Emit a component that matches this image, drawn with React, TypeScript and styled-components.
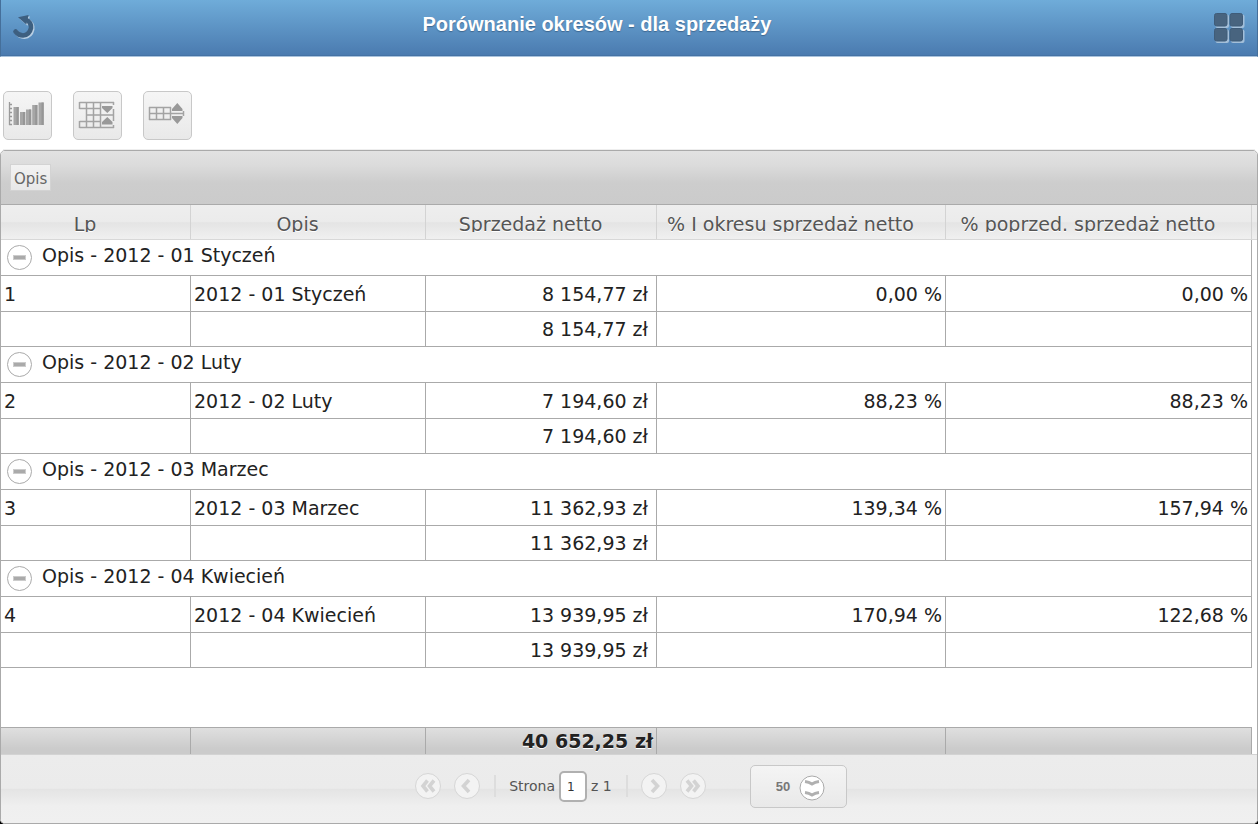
import React from "react";
import styled, { createGlobalStyle } from "styled-components";

const GlobalStyle = createGlobalStyle`
  *, *::before, *::after { box-sizing: border-box; }
  html { background: #000; }
  body {
    margin: 0;
    font-family: Verdana, "DejaVu Sans", sans-serif;
    color: #222;
  }
`;

const Page = styled.div`
  display: flex;
  flex-direction: column;
  min-height: 100vh;
  background: #fff;
  border-radius: 0 0 5px 5px;
`;

const TopBar = styled.header`
  display: flex;
  align-items: flex-start;
  justify-content: space-between;
  height: 57px;
  padding: 11px 12px 0 10px;
  border-left: 1px solid #456f9a;
  border-right: 1px solid #456f9a;
  border-bottom: 1px solid #a9c3dd;
  background: linear-gradient(#6facd9, #4a7aaf);
  box-shadow: inset 0 -1px 0 #4572a4;
`;

const Title = styled.h1`
  flex: 1;
  margin: 0;
  padding-right: 58px;
  font: bold 20px/26px "Liberation Sans", Arial, sans-serif;
  text-align: center;
  color: #fff;
  text-shadow: 0 1px 1px #3e6790;
`;

const BarButton = styled.button`
  display: block;
  padding: 0;
  border: 0;
  background: none;
  cursor: pointer;
  svg { display: block; }
`;

const Toolbar = styled.div`
  display: flex;
  gap: 21px;
  padding: 34px 3px 9px;
`;

const ToolButton = styled.button`
  display: flex;
  align-items: center;
  justify-content: center;
  width: 49px;
  height: 49px;
  padding: 0 2px 2px 0;
  border: 1px solid #c8c8c8;
  border-radius: 5px;
  background: linear-gradient(#f5f5f5, #e9e9e9);
  cursor: pointer;
`;

const Rule = styled.div`
  height: 1px;
  margin: 0 3px;
  background: #eee;
`;

const Panel = styled.main`
  display: flex;
  flex: 1;
  flex-direction: column;
  border: 1px solid #aaa;
  border-radius: 5px;
  overflow: hidden;
`;

const GroupBar = styled.div`
  display: flex;
  align-items: center;
  height: 54px;
  padding: 0 9px;
  border-bottom: 1px solid #aaa;
  background: linear-gradient(#e2e2e2, #dcdcdc 25%, #cdcdcd 60%, #cbcbcb);
`;

const GroupTag = styled.button`
  height: 27px;
  padding: 2px 3px 0;
  border: 1px solid #d3d3d3;
  background: linear-gradient(#f2f2f2, #e8e8e8);
  font: 15px/22px Verdana, "DejaVu Sans", sans-serif;
  color: #666;
`;

const HeadStrip = styled.div`
  padding-right: 5px;
  border-bottom: 1px solid #d8d8d8;
  background: linear-gradient(#eee, #ebebeb 50%, #e4e4e4 52%, #f0f0f0);
`;

const BodyArea = styled.div`
  flex: 1;
  padding-right: 5px;
  background: #fff;
`;

const FootStrip = styled.div`
  padding-right: 5px;
  background: #fff;
`;

const Table = styled.table`
  width: 100%;
  table-layout: fixed;
  border-collapse: separate;
  border-spacing: 0;
  font-size: 19px;
  line-height: 24px;
`;

const HeadCell = styled.th`
  height: 34px;
  padding: 0 22px 0 1px;
  border-right: 1px solid #d3d3d3;
  font-weight: normal;
  color: #555;
  text-shadow: 0 1px 0 #fff;
`;

const HeadLabel = styled.span`
  display: block;
  height: 20px;
  overflow: hidden;
  white-space: nowrap;
`;

const GroupCell = styled.td`
  height: 36px;
  padding: 0 6px;
  border-right: 1px solid #aaa;
  border-bottom: 1px solid #aaa;
  vertical-align: top;
`;

const GroupLine = styled.div`
  display: flex;
  gap: 10px;
  height: 30px;
  align-items: center;
`;

const Toggle = styled.button`
  display: flex;
  flex: none;
  align-items: center;
  justify-content: center;
  width: 25px;
  height: 25px;
  margin-top: 5px;
  padding: 0;
  border: 1px solid #aaa;
  border-radius: 50%;
  background: #fff;
  cursor: pointer;
`;

const Minus = styled.span`
  width: 13px;
  height: 5px;
  border: 1px solid #ccc;
  background: #aaa;
`;

const Cell = styled.td<{ $align?: "left" | "right"; $short?: boolean; $wide?: boolean }>`
  height: ${(p) => (p.$short ? 35 : 36)}px;
  padding: 0 ${(p) => (p.$wide ? 8 : 3)}px 0 3px;
  border-right: 1px solid #aaa;
  border-bottom: 1px solid #aaa;
  text-align: ${(p) => p.$align ?? "left"};
  white-space: nowrap;
`;

const FootCell = styled.td`
  height: 27px;
  padding: 0 3px;
  border-top: 1px solid #aaa;
  border-right: 1px solid #aaa;
  background: linear-gradient(#dfdfdf, #cbcbcb 80%);
  font-weight: bold;
  text-align: right;
  text-shadow: 0 1px 0 #fff;
  white-space: nowrap;
`;

const Pager = styled.nav`
  display: flex;
  align-items: flex-start;
  justify-content: center;
  height: 69px;
  padding: 10px 0 0 4px;
  border-top: 1px solid #d3d3d3;
  background: linear-gradient(#ececec, #ebebeb 49%, #e4e4e4 50%, #efefef 75%, #f0f0f0);
  font-size: 14px;
  color: #555;
`;

const PagerGroup = styled.div`
  display: flex;
  align-items: center;
  gap: 13px;
  height: 42px;
  margin-right: 44px;
`;

const RoundButton = styled.button`
  display: block;
  width: 26px;
  height: 26px;
  padding: 0;
  border: 1px solid #d6d6d6;
  border-radius: 13px;
  background: #f3f3f3;
  svg { display: block; }
`;

const Divider = styled.span`
  width: 2px;
  height: 22px;
  margin-left: 1px;
  background: #ddd;
`;

const PageLabel = styled.label`
  display: flex;
  align-items: center;
  gap: 4px;
`;

const PageInput = styled.input`
  width: 28px;
  height: 31px;
  padding: 2px 6px 0;
  border: 2px solid #b0b0b0;
  border-radius: 5px;
  background: #fff;
  font: 12px "DejaVu Sans", sans-serif;
  color: #333;
`;

const SizeBox = styled.div`
  position: relative;
  width: 97px;
  height: 43px;
`;

const SizeSelect = styled.select`
  width: 100%;
  height: 100%;
  padding: 0 25px;
  appearance: none;
  border: 1px solid #c8c8c8;
  border-radius: 5px;
  background: linear-gradient(#f4f4f4, #e9e9e9);
  font: bold 13px "Liberation Sans", Arial, sans-serif;
  color: #777;
`;

const SizeIcon = styled.svg`
  position: absolute;
  top: 10px;
  right: 22px;
  pointer-events: none;
`;

const widths = [190, 235, 231, 289, 306];
const headers = ["Lp", "Opis", "Sprzedaż netto", "% I okresu sprzedaż netto", "% poprzed. sprzedaż netto"];
const rows = [
  { name: "2012 - 01 Styczeń", net: "8 154,77 zł", first: "0,00 %", prev: "0,00 %" },
  { name: "2012 - 02 Luty", net: "7 194,60 zł", first: "88,23 %", prev: "88,23 %" },
  { name: "2012 - 03 Marzec", net: "11 362,93 zł", first: "139,34 %", prev: "157,94 %" },
  { name: "2012 - 04 Kwiecień", net: "13 939,95 zł", first: "170,94 %", prev: "122,68 %" },
];

const Columns = () => (
  <colgroup>
    {widths.map((w, i) => (
      <col key={i} width={w} />
    ))}
  </colgroup>
);

const BackIcon = () => {
  const shape = (
    <>
      <path d="M14.5 8.5Q20.5 11 20 17Q18.5 24 12 24.5Q7.5 24.5 4.5 20.5" fill="none" strokeWidth="4.6" strokeLinecap="round" />
      <path d="M7 6.3L17.6 4L15.3 13.5Z" stroke="none" />
    </>
  );
  return (
    <svg width="28" height="32" viewBox="0 0 28 32">
      <g transform="translate(1.2 1.2)" stroke="#b9cfe3" fill="#b9cfe3">{shape}</g>
      <g stroke="#3d5f80" fill="#3d5f80">{shape}</g>
    </svg>
  );
};

const TilesIcon = () => (
  <svg width="32" height="33" viewBox="0 0 32 33">
    {[[1, 2], [16.5, 2], [1, 17], [16.5, 17]].map(([x, y]) => (
      <g key={`${x}-${y}`}>
        <rect x={x + 1.5} y={y + 1.5} width="13.5" height="13.5" rx="2" fill="#a3bfd9" />
        <rect x={x + 0.5} y={y + 0.5} width="12.5" height="12.5" rx="2" fill="#48647f" stroke="#3f5c79" />
      </g>
    ))}
  </svg>
);

const ChartIcon = () => (
  <svg width="37" height="28" viewBox="0 0 37 28">
    <path d="M1.5 1V24M2 3.5h2M2 7.5h2M2 11.5h2M2 15.5h2M2 19.5h2M1 23.5h3" stroke="#999" strokeWidth="1.3" fill="none" />
    {[[5.5, 6], [12, 11], [18, 8.5], [24.2, 4], [30.5, 1.5]].map(([x, y]) => (
      <g key={x}>
        <rect x={x} y={y} width="5.2" height={24 - y} fill="#a6a6a6" />
        <rect x={x + 3} y={y} width="2.2" height={24 - y} fill="#969696" />
      </g>
    ))}
  </svg>
);

const ExpandIcon = () => (
  <svg width="37" height="28" viewBox="0 0 37 28">
    <path
      d="M1.5 1.5H36M1.5 7.5H23M8.5 14H35.5M1.5 20.5H23M1.5 26.5H36M1.5 1V8M1.5 20V27M8.5 1V27M15.5 1V27M22.5 1V27M35.5 1V4M35.5 8V20M35.5 24V27"
      stroke="#a3a3a3"
      strokeWidth="1.5"
      fill="none"
    />
    <path d="M24 5H34.5V7L29.3 12L24 7ZM24 23.5H34.5V21L29.3 16L24 21Z" fill="#999" />
  </svg>
);

const CollapseIcon = () => (
  <svg width="37" height="28" viewBox="0 0 37 28">
    <path d="M1 6.5H23M1.5 12.5H35M1 18.5H23M1.5 6V19M8.5 6V19M15.5 6V19M22.5 6V19M35.5 10V15" stroke="#a3a3a3" strokeWidth="1.5" fill="none" />
    <path d="M24 10V8L29.3 2L34.5 8V10ZM24 15V17L29.3 23L34.5 17V15Z" fill="#999" />
  </svg>
);

const Chevrons = ({ paths }: { paths: string }) => (
  <svg width="24" height="24" viewBox="0 0 24 24">
    <path d={paths} fill="none" stroke="#d3d3d3" strokeWidth="3.6" />
  </svg>
);

export default function App() {
  return (
    <>
      <GlobalStyle />
      <Page>
        <TopBar>
          <BarButton aria-label="Wstecz"><BackIcon /></BarButton>
          <Title>Porównanie okresów - dla sprzedaży</Title>
          <BarButton aria-label="Menu"><TilesIcon /></BarButton>
        </TopBar>
        <Toolbar>
          <ToolButton aria-label="Wykres"><ChartIcon /></ToolButton>
          <ToolButton aria-label="Zwiń grupy"><ExpandIcon /></ToolButton>
          <ToolButton aria-label="Rozwiń grupy"><CollapseIcon /></ToolButton>
        </Toolbar>
        <Rule />
        <Panel>
          <GroupBar>
            <GroupTag>Opis</GroupTag>
          </GroupBar>
          <HeadStrip>
            <Table>
              <Columns />
              <thead>
                <tr>
                  {headers.map((h) => (
                    <HeadCell key={h} scope="col"><HeadLabel>{h}</HeadLabel></HeadCell>
                  ))}
                </tr>
              </thead>
            </Table>
          </HeadStrip>
          <BodyArea>
            <Table>
              <Columns />
              {rows.map((r, i) => (
                <tbody key={r.name}>
                  <tr>
                    <GroupCell colSpan={5}>
                      <GroupLine>
                        <Toggle aria-label={`Zwiń ${r.name}`}><Minus /></Toggle>
                        <span>Opis - {r.name}</span>
                      </GroupLine>
                    </GroupCell>
                  </tr>
                  <tr>
                    <Cell>{i + 1}</Cell>
                    <Cell>{r.name}</Cell>
                    <Cell $align="right" $wide>{r.net}</Cell>
                    <Cell $align="right">{r.first}</Cell>
                    <Cell $align="right">{r.prev}</Cell>
                  </tr>
                  <tr>
                    <Cell $short />
                    <Cell $short />
                    <Cell $short $align="right" $wide>{r.net}</Cell>
                    <Cell $short />
                    <Cell $short />
                  </tr>
                </tbody>
              ))}
            </Table>
          </BodyArea>
          <FootStrip>
            <Table>
              <Columns />
              <tbody>
                <tr>
                  <FootCell />
                  <FootCell />
                  <FootCell>40 652,25 zł</FootCell>
                  <FootCell />
                  <FootCell />
                </tr>
              </tbody>
            </Table>
          </FootStrip>
          <Pager aria-label="Stronicowanie">
            <PagerGroup>
              <RoundButton aria-label="Pierwsza"><Chevrons paths="M11.5 6.5L7 12L11.5 17.5M18 6.5L13.5 12L18 17.5" /></RoundButton>
              <RoundButton aria-label="Poprzednia"><Chevrons paths="M14 6L8.5 12L14 18" /></RoundButton>
              <Divider />
              <PageLabel>
                Strona <PageInput defaultValue="1" /> z 1
              </PageLabel>
              <Divider />
              <RoundButton aria-label="Następna"><Chevrons paths="M10 6L15.5 12L10 18" /></RoundButton>
              <RoundButton aria-label="Ostatnia"><Chevrons paths="M6 6.5L10.5 12L6 17.5M12.5 6.5L17 12L12.5 17.5" /></RoundButton>
            </PagerGroup>
            <SizeBox>
              <SizeSelect aria-label="Wierszy na stronie" defaultValue="50">
                <option>20</option>
                <option>50</option>
                <option>100</option>
              </SizeSelect>
              <SizeIcon width="26" height="26" viewBox="0 0 26 26">
                <circle cx="13" cy="13" r="12" fill="#fff" stroke="#aaa" />
                <path d="M6 6.5Q10 7 13 9Q16 7 20 6.5M6 17.5Q10 18 13 20Q16 18 20 17.5" fill="none" stroke="#b0b0b0" strokeWidth="3" />
              </SizeIcon>
            </SizeBox>
          </Pager>
        </Panel>
      </Page>
    </>
  );
}
